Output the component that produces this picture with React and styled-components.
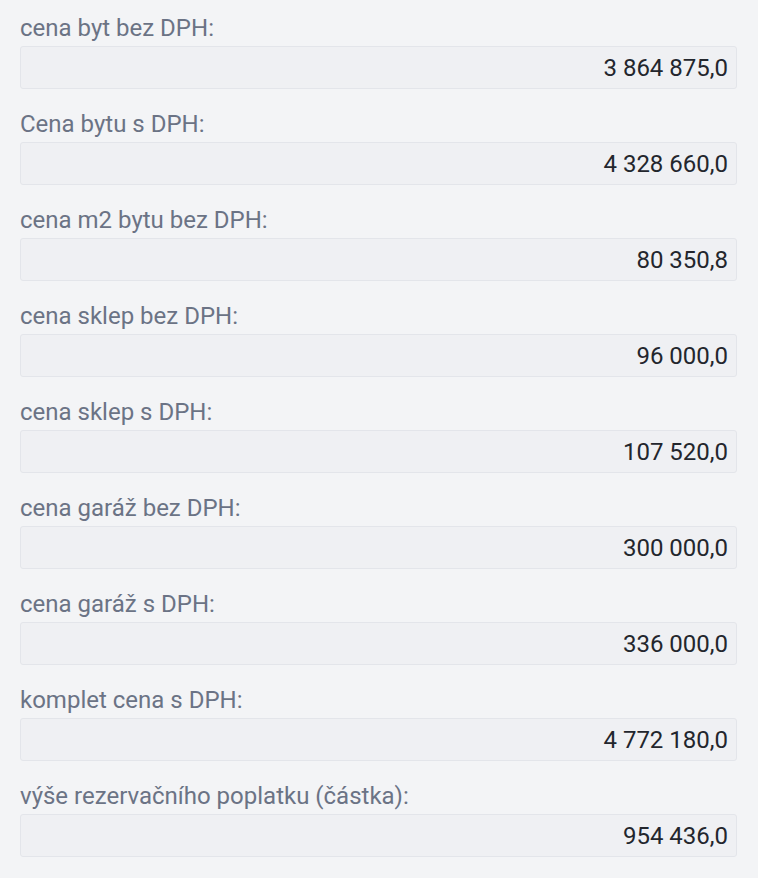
import React from 'react';
import styled, { createGlobalStyle } from 'styled-components';

const GlobalStyle = createGlobalStyle`
  body {
    margin: 0;
    background: #f3f4f6;
    font-family: Roboto, "Liberation Sans", sans-serif;
  }
`;

const Form = styled.div`
  padding: 14px 21px 0 20px;
  display: flex;
  flex-direction: column;
  gap: 21px;
`;

const Field = styled.div`
  display: flex;
  flex-direction: column;
  gap: 4px;
`;

const Label = styled.label`
  font-size: 24px;
  line-height: 28px;
  color: #6b7385;
`;

const Value = styled.div`
  height: 43px;
  box-sizing: border-box;
  border: 1px solid #e3e5ea;
  border-radius: 3px;
  background: #eff0f3;
  display: flex;
  align-items: center;
  justify-content: flex-end;
  padding: 0 8px;
  font-size: 24px;
  color: #23262d;
`;

const fields = [
  ['cena byt bez DPH:', '3 864 875,0'],
  ['Cena bytu s DPH:', '4 328 660,0'],
  ['cena m2 bytu bez DPH:', '80 350,8'],
  ['cena sklep bez DPH:', '96 000,0'],
  ['cena sklep s DPH:', '107 520,0'],
  ['cena garáž bez DPH:', '300 000,0'],
  ['cena garáž s DPH:', '336 000,0'],
  ['komplet cena s DPH:', '4 772 180,0'],
  ['výše rezervačního poplatku (částka):', '954 436,0'],
];

const App = () => (
  <>
    <GlobalStyle />
    <Form>
      {fields.map(([label, value]) => (
        <Field key={label}>
          <Label>{label}</Label>
          <Value>{value}</Value>
        </Field>
      ))}
    </Form>
  </>
);

export default App;
